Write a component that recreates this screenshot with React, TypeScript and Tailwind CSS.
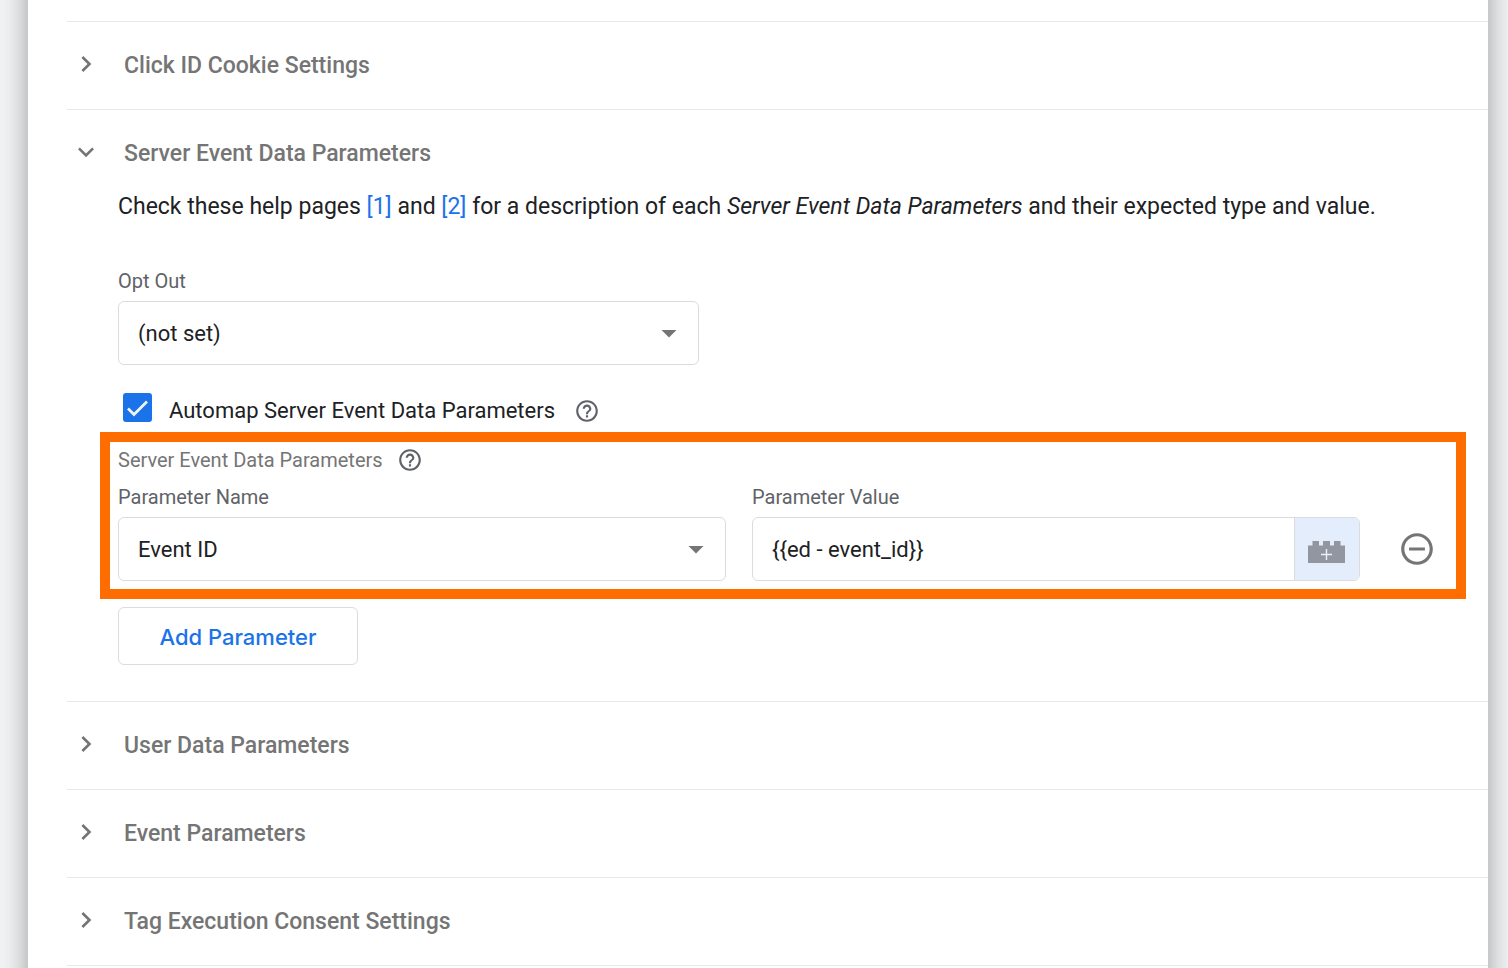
import React, { ReactNode, useState } from 'react';
import {
  MdArrowDropDown,
  MdCheck,
  MdChevronRight,
  MdExpandMore,
  MdHelpOutline,
  MdRemoveCircleOutline,
} from 'react-icons/md';

interface SectionProps {
  title: string;
  defaultOpen?: boolean;
  children?: ReactNode;
}

function Section({ title, defaultOpen = false, children }: SectionProps) {
  const [open, setOpen] = useState(defaultOpen);
  const Chevron = open ? MdExpandMore : MdChevronRight;

  return (
    <section className="border-t border-[#e6e8ea]">
      <h2>
        <button
          type="button"
          aria-expanded={open}
          onClick={() => setOpen(!open)}
          className={`flex w-full items-start gap-[22px] pl-[3px] text-left ${open ? 'pb-[25px]' : 'pb-[29px]'}`}
        >
          <Chevron className="mt-[26px] -mb-4 size-8 shrink-0 text-[#757575]" />
          <span className="pt-[30px] text-[23px] leading-7 font-medium text-[#757575]">{title}</span>
        </button>
      </h2>
      {open && children}
    </section>
  );
}

interface SelectProps {
  id: string;
  value: string;
  options: string[];
  onChange: (val: string) => void;
}

function Select({ id, value, options, onChange }: SelectProps) {
  return (
    <div className="relative">
      <select
        id={id}
        value={value}
        onChange={(e) => onChange(e.target.value)}
        className="h-16 w-full appearance-none rounded-md border border-[#dadce0] bg-white pr-14 pl-[19px] text-[22px] text-[#202124]"
      >
        {options.map((option) => (
          <option key={option}>{option}</option>
        ))}
      </select>
      <MdArrowDropDown className="pointer-events-none absolute top-[14px] right-3 size-9 text-[#757575]" />
    </div>
  );
}

function HelpButton({ label }: { label: string }) {
  return (
    <button type="button" aria-label={label} className="text-[#5f6368]">
      <MdHelpOutline className="size-[26px]" />
    </button>
  );
}

function BrickIcon() {
  return (
    <svg viewBox="0 0 37 22" className="h-[22px] w-[37px]" aria-hidden="true">
      <path d="M0 4.5h4.5V0h6.500v4.5H15V0h7v4.5h4V0h6.500v4.500H37V22H0z" fill="#9196a1" />
      <path d="M18.500 8v11M13 13.500h11" stroke="#e8f0fe" strokeWidth="1.400" />
    </svg>
  );
}

export default function App() {
  const [optOut, setOptOut] = useState('(not set)');
  const [automap, setAutomap] = useState(true);
  const [name, setName] = useState('Event ID');
  const [value, setValue] = useState('{{ed - event_id}}');

  return (
    <div className="min-h-screen overflow-hidden bg-[#f1f3f4] pr-5 pl-7 font-['Roboto',sans-serif] text-[#202124]">
      {/* The sheet runs past the top and bottom so its shadow stays even along the sides */}
      <main className="-my-10 min-h-[calc(100vh+80px)] bg-white pt-[61px] pb-10 pl-[39px] shadow-[0_0_26px_rgba(0,0,0,0.36)]">
        <Section title="Click ID Cookie Settings" />

        <Section title="Server Event Data Parameters" defaultOpen>
          <div className="pr-[22px] pb-9 pl-[33px]">
            <div className="pl-[18px]">
              <p className="text-[23px] leading-7">
                Check these help pages <a href="#help-1" className="text-[#1a73e8]">[1]</a> and{' '}
                <a href="#help-2" className="text-[#1a73e8]">[2]</a> for a description of each{' '}
                <em>Server Event Data Parameters</em> and their expected type and value.
              </p>

              <div className="mt-12 w-[581px] max-w-full">
                <label htmlFor="opt-out" className="mb-2 block text-[20px] leading-6 text-[#5f6368]">
                  Opt Out
                </label>
                <Select id="opt-out" value={optOut} onChange={setOptOut} options={['(not set)', 'true', 'false']} />
              </div>

              <div className="mt-7 flex h-[39px] items-start gap-[17px] pl-[5px]">
                <div className="relative size-[29px]">
                  <input
                    id="automap"
                    type="checkbox"
                    checked={automap}
                    onChange={(e) => setAutomap(e.target.checked)}
                    className="block size-[29px] appearance-none rounded-[3px] border-2 border-[#757575] checked:border-[#1a73e8] checked:bg-[#1a73e8]"
                  />
                  {automap && (
                    <svg
                      viewBox="0 0 29 29"
                      className="pointer-events-none absolute inset-0 size-[29px] text-[#f1f3f4]"
                      aria-hidden="true"
                    >
                      <path d="M5 15.500l6 6L24 8.500" fill="none" stroke="currentColor" strokeWidth="2.800" />
                    </svg>
                  )}
                </div>
                <div className="flex items-center gap-[19px] pt-1">
                  <label htmlFor="automap" className="text-[22px] leading-7">
                    Automap Server Event Data Parameters
                  </label>
                  <HelpButton label="About automapping" />
                </div>
              </div>
            </div>

            {/* Highlighted parameter table */}
            <div className="border-10 border-[#ff6d00] pt-[6px] pb-2 pl-2">
              <div className="flex h-6 items-center gap-[14px]">
                <h3 className="text-[20px] leading-6 text-[#757575]">Server Event Data Parameters</h3>
                <HelpButton label="About server event data parameters" />
              </div>

              <div className="mt-[13px] flex items-end">
                <div className="grid flex-1 grid-cols-2 gap-[26px]">
                  <div>
                    <label htmlFor="param-name" className="mb-2 block text-[20px] leading-6 text-[#5f6368]">
                      Parameter Name
                    </label>
                    <Select id="param-name" value={name} onChange={setName} options={['Event ID', 'Event Name', 'Event Time']} />
                  </div>
                  <div>
                    <label htmlFor="param-value" className="mb-2 block text-[20px] leading-6 text-[#5f6368]">
                      Parameter Value
                    </label>
                    <div className="flex h-16 overflow-hidden rounded-md border border-[#dadce0]">
                      <input
                        id="param-value"
                        type="text"
                        value={value}
                        onChange={(e) => setValue(e.target.value)}
                        className="min-w-0 flex-1 px-[19px] text-[22px]"
                      />
                      <button
                        type="button"
                        aria-label="Insert variable"
                        className="flex w-[65px] items-center border-l border-[#dadce0] bg-[#e4edfc] pt-[6px] pl-[13px]"
                      >
                        <BrickIcon />
                      </button>
                    </div>
                  </div>
                </div>
                <button
                  type="button"
                  aria-label="Remove row"
                  className="mr-5 ml-[38px] flex h-16 items-center text-[#757575]"
                >
                  <MdRemoveCircleOutline className="size-[38px]" />
                </button>
              </div>
            </div>

            <button
              type="button"
              className="mt-2 ml-[18px] block h-[58px] w-60 rounded-md border border-[#dadce0] pt-[2px] font-['Inter',sans-serif] text-[22px] font-medium text-[#1a73e8]"
            >
              Add Parameter
            </button>
          </div>
        </Section>

        <Section title="User Data Parameters" />
        <Section title="Event Parameters" />
        <Section title="Tag Execution Consent Settings" />
        <div className="border-t border-[#e6e8ea]" />
      </main>
    </div>
  );
}
